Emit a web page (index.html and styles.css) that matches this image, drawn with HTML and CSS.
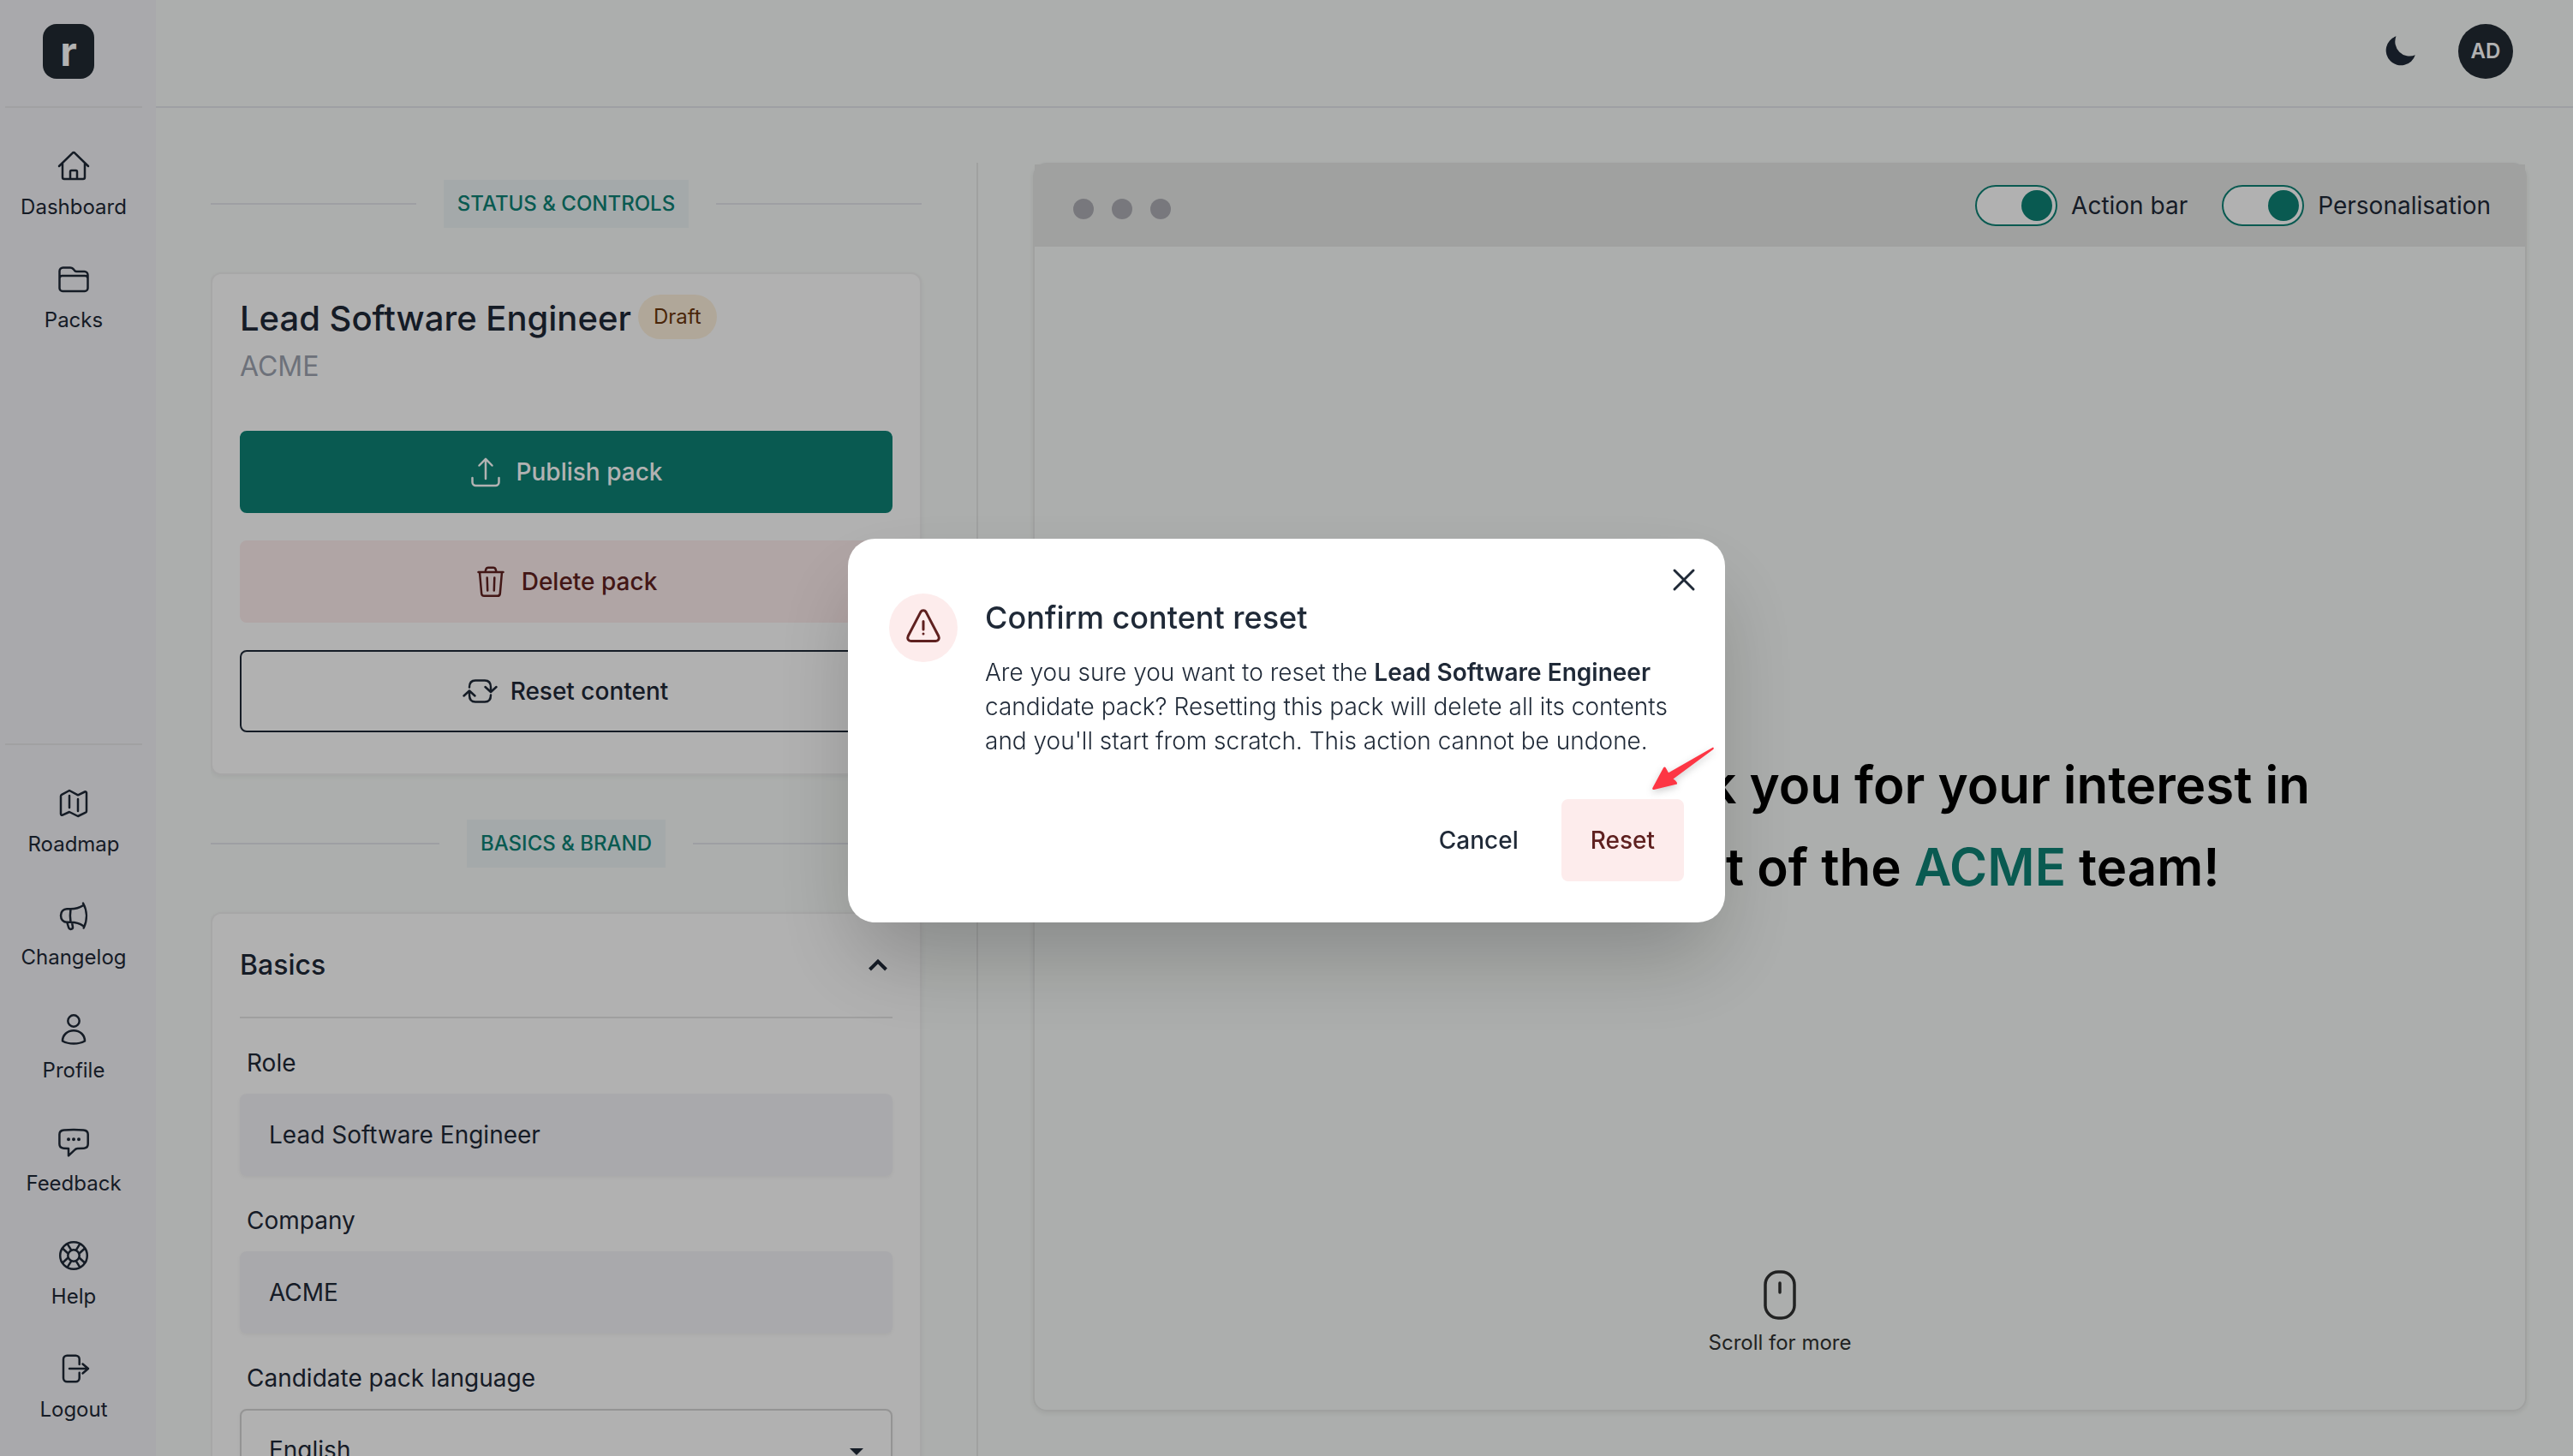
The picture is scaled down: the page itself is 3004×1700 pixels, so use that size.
FILE: index.html
```html
<!DOCTYPE html>
<html lang="en">
<head>
    <meta charset="UTF-8">
    <meta name="viewport" content="width=device-width, initial-scale=1.0">
    <title>Lead Software Engineer | Pack editor</title>
    <link rel="stylesheet" href="styles.css">
</head>
<body>
    <div class="app">
        <aside class="sidebar">
            <div class="sidebar-brand">
                <a class="logo" href="#">r</a>
            </div>

            <nav class="sidebar-nav">
                <a class="nav-item" href="#">
                    <svg class="nav-icon" viewBox="0 0 40 40"><path d="M3 20 18.500 4.800a2 2 0 0 1 3 0L37 20M7 17v16a2 2 0 0 0 2 2h22a2 2 0 0 0 2-2V17M16 35v-8.500a1.500 1.500 0 0 1 1.500-1.500h5a1.500 1.500 0 0 1 1.500 1.500V35"/></svg>
                    Dashboard
                </a>
                <a class="nav-item" href="#">
                    <svg class="nav-icon" viewBox="0 0 40 40"><path d="M3.500 30.500v-20a4 4 0 0 1 4-4H16c1.500 0 2.500.5 3.500 1.500l1.500 1.800c.8.9 1.500 1.200 2.500 1.200H32.500a4 4 0 0 1 4 4v15.500a3.500 3.500 0 0 1-3.500 3.500H7a3.500 3.500 0 0 1-3.500-3.500zM3.500 19a3 3 0 0 1 3-3h27a3 3 0 0 1 3 3"/></svg>
                    Packs
                </a>
            </nav>

            <nav class="sidebar-nav sidebar-nav-bottom">
                <a class="nav-item" href="#">
                    <svg class="nav-icon" viewBox="0 0 40 40"><path d="M5 11.500a2 2 0 0 1 1-1.700L15 5l10 5.300 8-3.800a1.400 1.400 0 0 1 2 1.300V29a2 2 0 0 1-1 1.700L25 35l-10-5-8 3.700a1.400 1.400 0 0 1-2-1.300zM15 11v14M25 15v14"/></svg>
                    Roadmap
                </a>
                <a class="nav-item" href="#">
                    <svg class="nav-icon" viewBox="0 0 40 40"><path d="M16.500 11.300H12c-4 0-7 3.200-7 7.700s3 7.700 7 7.700h4.500M16.500 11.300c5 0 10.500-1.500 14.800-4.300M16.500 26.700c5 0 10.500 1.300 14.500 4.300M16.500 11.300c-.8 5-.8 10.400 0 15.400M31 4.500c5 9 5 20 .7 29M12.300 27l2 6.500c1.200 2.400 5 1.500 4.700-1L18 27"/></svg>
                    Changelog
                </a>
                <a class="nav-item" href="#">
                    <svg class="nav-icon" viewBox="0 0 40 40"><circle cx="20" cy="10" r="6.700"/><path d="M7 33.500c0-7 5.500-12.200 13-12.200s13 5.200 13 12.200c-4 2.200-8 3-13 3s-9-.8-13-3z"/></svg>
                    Profile
                </a>
                <a class="nav-item" href="#">
                    <svg class="nav-icon" viewBox="0 0 40 40"><path d="M8.500 5.600c8-.8 15-.8 23 0 3.200.3 5.200 2 5.200 5v11.200c0 3-1.700 4.700-4.700 4.900l-7.500.4c-1.600.1-2.500.6-3.600 1.700L14 35.300V27l-5.700-.3c-3-.2-4.900-1.900-4.900-4.900V10.600c0-3 2-4.700 5.100-5z"/><path class="nav-icon-dots" d="M14 16.300h.01M20 16.300h.01M26 16.300h.01"/></svg>
                    Feedback
                </a>
                <a class="nav-item" href="#">
                    <svg class="nav-icon" viewBox="0 0 40 40"><circle cx="20" cy="20" r="15.800"/><circle cx="20" cy="20" r="6.700"/><path d="m13.500 17.500-6.300-5.700M17.200 13.600l-4.500-7.200M26.500 17.500l6.300-5.700M22.800 13.600l4.500-7.200M13.500 22.500l-6.300 5.700M17.200 26.400l-4.500 7.200M26.500 22.500l6.300 5.700M22.800 26.400l4.500 7.200"/></svg>
                    Help
                </a>
                <a class="nav-item" href="#">
                    <svg class="nav-icon" viewBox="0 0 40 40"><path d="M26.700 15V9a4.300 4.300 0 0 0-4.300-4.300H12.300A4.300 4.300 0 0 0 8 9v22a4.300 4.300 0 0 0 4.300 4.300h10.100a4.300 4.300 0 0 0 4.300-4.300v-6.300M15 20h22M30.500 14.500 37 20l-6.500 5.500"/></svg>
                    Logout
                </a>
            </nav>
        </aside>

        <div class="page">
            <header class="topbar">
                <button class="theme-btn" type="button" aria-label="Toggle dark mode">
                    <svg viewBox="0 0 36 36"><path d="M13.500.3A17.500 17.500 0 1 0 35.800 22.300 17 17 0 0 1 13.500.3z"/></svg>
                </button>
                <button class="avatar" type="button">AD</button>
            </header>

            <main class="workspace">
                <section class="editor">
                    <div class="section-title"><span>STATUS &amp; CONTROLS</span></div>

                    <div class="card card-status">
                        <div class="pack-title">
                            <h1>Lead Software Engineer</h1>
                            <span class="chip">Draft</span>
                        </div>
                        <p class="pack-company">ACME</p>

                        <div class="pack-actions">
                            <button class="btn btn-primary" type="button">
                                <svg class="btn-icon" viewBox="0 0 36 36"><path d="M18 26V3M10.500 10.500 18 2.800l7.500 7.700M2.500 25v5a4 4 0 0 0 4 4h23a4 4 0 0 0 4-4v-5"/></svg>
                                Publish pack
                            </button>
                            <button class="btn btn-danger" type="button">
                                <svg class="btn-icon" viewBox="0 0 36 36"><path d="M3.500 7h29M11.500 7l.8-3.200c.4-1.400 1.200-2.100 2.700-2.100h6c1.500 0 2.300.7 2.700 2.100l.8 3.200M5 7l2.200 25c.2 1.900 1.200 2.800 3 2.800h15.600c1.800 0 2.800-.9 3-2.800L31 7M13.700 13.500l.5 15M22.300 13.500l-.5 15"/></svg>
                                Delete pack
                            </button>
                            <button class="btn btn-outline" type="button">
                                <svg class="btn-icon" viewBox="0 0 36 36"><path d="M6 13.500c0-5 2.500-8 7-8h11c4.500 0 7 3 7 8V19M24.500 13l6.500 6 6.500-6M31 22.500c0 5-2.500 8-7 8H13c-4.500 0-7-3-7-8V17.500M-.5 23.500 6 17.500l6.500 6"/></svg>
                                Reset content
                            </button>
                        </div>
                    </div>

                    <div class="section-title"><span>BASICS &amp; BRAND</span></div>

                    <div class="card card-form">
                        <button class="card-toggle" type="button" aria-expanded="true">
                            Basics
                            <svg viewBox="0 0 24 16"><path d="M2.500 13 12 3.500l9.500 9.500"/></svg>
                        </button>

                        <div class="field">
                            <label for="role">Role</label>
                            <input id="role" type="text" value="Lead Software Engineer">
                        </div>
                        <div class="field">
                            <label for="company">Company</label>
                            <input id="company" type="text" value="ACME">
                        </div>
                        <div class="field">
                            <label for="language">Candidate pack language</label>
                            <div class="select">
                                <select id="language">
                                    <option>English</option>
                                </select>
                            </div>
                        </div>
                    </div>
                </section>

                <section class="preview">
                    <div class="preview-bar">
                        <div class="dots"><i></i><i></i><i></i></div>
                        <label class="switch"><input type="checkbox" checked>Action bar</label>
                        <label class="switch"><input type="checkbox" checked>Personalisation</label>
                    </div>
                    <div class="preview-body">
                        <h2>Hi Candidate, thank you for your interest in<br>becoming a part of the <em>ACME</em> team!</h2>
                        <div class="scroll-hint">
                            <svg viewBox="0 0 40 60"><rect x="3" y="3" width="34" height="54" rx="15"/><path d="M20 16v11"/></svg>
                            Scroll for more
                        </div>
                    </div>
                </section>
            </main>
        </div>
    </div>

    <div class="backdrop">
        <div class="modal" role="dialog" aria-modal="true" aria-labelledby="modalTitle">
            <button class="modal-close" type="button" aria-label="Close">
                <svg viewBox="0 0 24 24"><path d="m1 1 22 22M23 1 1 23"/></svg>
            </button>
            <div class="modal-content">
                <div class="modal-badge">
                    <svg viewBox="0 2 40 40"><path d="M17 3.400 2.200 31.800C.8 34.700 2.500 37.500 5.600 37.500h28.800c3.100 0 4.800-2.800 3.400-5.700L23 3.400c-1.400-2.300-4.600-2.300-6 0zM20 14.500v9.500M20 29h.01"/></svg>
                </div>
                <div class="modal-text">
                    <h2 id="modalTitle">Confirm content reset</h2>
                    <p>Are you sure you want to reset the <strong>Lead Software Engineer</strong> candidate pack? Resetting this pack will delete all its contents and you'll start from scratch. This action cannot be undone.</p>
                </div>
            </div>
            <div class="modal-actions">
                <button class="btn" type="button">Cancel</button>
                <button class="btn btn-danger" type="button">Reset</button>
            </div>
            <svg class="pointer" viewBox="0 0 72 50"><path d="M71 0.500c1 .5 1 1.500.2 2.500L24.500 37.500c3 2 5 4 4.500 6L2 50c-1.500 0-2.300-1-1.500-2.200L13 24.500c1-1.500 2-1.500 2.800 0l3.200 5.700z"/></svg>
        </div>
    </div>
</body>
</html>
```
FILE: styles.css
```css
:root {
    --bg: #f7faf8;
    --panel: #f3f3f6;
    --text: #1f2937;
    --muted: #9ca3af;
    --green: #0e8275;
    --line: #e2e4ea;
    --frame: #e5e7e6;
    --red-bg: #fdecec;
    --red: #5f2120;
}

* {
    margin: 0;
    padding: 0;
    box-sizing: border-box;
}

body {
    font-family: Inter, sans-serif;
    font-size: 28px;
    line-height: 40px;
    color: var(--text);
    background: var(--bg);
}

button, input, select {
    font: inherit;
    color: inherit;
    border: none;
    background: none;
}

button {
    cursor: pointer;
}

a {
    color: inherit;
    text-decoration: none;
}

svg {
    display: block;
    fill: none;
    stroke: currentColor;
    stroke-linecap: round;
    stroke-linejoin: round;
    overflow: visible;
}

.app {
    display: flex;
    height: 100vh;
    overflow: hidden;
}

/* Sidebar */
.sidebar {
    display: flex;
    flex-direction: column;
    flex: none;
    width: 182px;
    padding: 0 16px 22px 6px;
    background: var(--panel);
}

.sidebar-brand {
    padding: 28px 44px 32px;
    border-bottom: 2px solid #e7e7e9;
}

.logo {
    display: flex;
    align-items: center;
    justify-content: center;
    width: 60px;
    height: 64px;
    border-radius: 16px;
    background: #212a33;
    color: #fff;
    font-size: 48px;
    font-weight: 700;
}

.sidebar-nav {
    display: flex;
    flex-direction: column;
    gap: 16px;
    padding-top: 32px;
}

.sidebar-nav-bottom {
    margin-top: auto;
    border-top: 2px solid #e7e7e9;
}

.nav-item {
    display: flex;
    flex-direction: column;
    align-items: center;
    gap: 12px;
    padding: 16px 0;
    font-size: 24px;
    line-height: 32px;
}

.nav-icon {
    width: 40px;
    height: 40px;
    stroke-width: 2.5;
}

.nav-icon-dots {
    stroke-width: 4;
}

/* Top bar */
.page {
    display: flex;
    flex-direction: column;
    flex: 1;
    min-width: 0;
}

.topbar {
    display: flex;
    flex: none;
    justify-content: flex-end;
    align-items: center;
    gap: 50px;
    padding: 28px 70px 32px;
    border-bottom: 2px solid var(--line);
}

.theme-btn svg {
    width: 36px;
    height: 36px;
    fill: currentColor;
    stroke: none;
}

.avatar {
    width: 64px;
    height: 64px;
    border-radius: 50%;
    background: #212a33;
    color: #fff;
    font-size: 24px;
    font-weight: 600;
}

.workspace {
    display: grid;
    grid-template-columns: clamp(640px, 30vw, 896px) minmax(0, 1fr);
    gap: 64px;
    flex: 1;
    min-height: 0;
    padding: 64px 54px 0 64px;
}

/* Editor column */
.editor {
    min-height: 0;
    padding: 20px 64px 0 0;
    border-right: 2px solid var(--frame);
    overflow: hidden;
}

.section-title {
    display: flex;
    align-items: center;
    gap: 32px;
    margin-bottom: 52px;
}

.section-title::before,
.section-title::after {
    content: "";
    flex: 1;
    height: 2px;
    background: var(--line);
}

.section-title span {
    padding: 0 16px;
    background: #ebf2f4;
    color: var(--green);
    font-size: 24px;
    font-weight: 500;
    line-height: 56px;
}

.card {
    margin-bottom: 52px;
    border: 2px solid #efefef;
    border-radius: 12px;
    background: #fefefe;
    box-shadow: 0 2px 6px rgba(0, 0, 0, 0.06);
}

.card-status {
    padding: 24px 32px 48px;
}

.pack-title {
    display: flex;
    align-items: flex-start;
    gap: 8px;
}

.pack-title h1 {
    font-size: 40px;
    font-weight: 500;
    line-height: 56px;
}

.chip {
    padding: 0 18px;
    border-radius: 26px;
    background: #fcf0dc;
    color: #6b360c;
    font-size: 24px;
    line-height: 52px;
}

.pack-company {
    margin-top: 8px;
    color: var(--muted);
    font-size: 32px;
}

.pack-actions {
    display: flex;
    flex-direction: column;
    gap: 32px;
    margin-top: 55px;
}

.btn {
    display: flex;
    align-items: center;
    justify-content: center;
    gap: 18px;
    height: 96px;
    padding: 0 32px;
    border: 2px solid transparent;
    border-radius: 8px;
    font-weight: 500;
}

.btn-icon {
    width: 36px;
    height: 36px;
    stroke-width: 2.5;
}

.btn-primary {
    background: var(--green);
    border-color: var(--green);
    color: #fff;
}

.btn-danger {
    background: var(--red-bg);
    border-color: var(--red-bg);
    color: var(--red);
}

.btn-outline {
    border-color: var(--text);
}

.card-form {
    padding: 0 32px 48px;
}

.card-toggle {
    display: flex;
    align-items: center;
    justify-content: space-between;
    width: 100%;
    padding: 40px 5px 40px 0;
    border-bottom: 2px solid #e4e4e4;
    font-size: 32px;
    font-weight: 500;
}

.card-toggle svg {
    width: 24px;
    height: 16px;
    stroke-width: 4;
    stroke-linecap: butt;
    stroke-linejoin: miter;
}

.field {
    margin-top: 32px;
}

.field label {
    display: block;
    margin-bottom: 16px;
    padding-left: 8px;
}

.field input,
.field select {
    display: block;
    width: 100%;
    height: 96px;
    padding: 0 32px;
    border: 2px solid var(--panel);
    border-radius: 8px;
    background: var(--panel);
    box-shadow: 0 2px 4px rgba(0, 0, 0, 0.05);
}

.field select {
    appearance: none;
    border-color: #d4d4d4;
    background: #fefefe;
}

.select {
    position: relative;
}

.select::after {
    content: "";
    position: absolute;
    top: 46px;
    right: 34px;
    border: 8px solid transparent;
    border-top-color: var(--text);
    border-bottom: none;
}

/* Preview column */
.preview {
    display: flex;
    flex-direction: column;
    min-height: 0;
    margin-bottom: 52px;
    border: 2px solid var(--frame);
    border-radius: 16px;
    box-shadow: 0 2px 6px rgba(0, 0, 0, 0.08);
}

.preview-bar {
    display: flex;
    align-items: center;
    gap: 40px;
    padding: 24px 40px;
    background: var(--frame);
}

.dots {
    display: flex;
    gap: 21px;
    margin-right: auto;
    padding: 8px 5px 0;
}

.dots i {
    width: 24px;
    height: 24px;
    border-radius: 50%;
    background: #adadb3;
}

.switch {
    display: flex;
    align-items: center;
    gap: 16px;
}

.switch input {
    appearance: none;
    display: flex;
    justify-content: flex-end;
    width: 96px;
    height: 48px;
    padding: 4px;
    border: 2px solid var(--green);
    border-radius: 24px;
    background: #fefefe;
}

.switch input::before {
    content: "";
    width: 36px;
    border-radius: 50%;
    background: var(--green);
}

.preview-body {
    display: flex;
    flex: 1;
    flex-direction: column;
    align-items: center;
    justify-content: center;
    position: relative;
    padding-bottom: 6px;
    color: #000;
}

.preview-body h2 {
    font-size: 60px;
    font-weight: 600;
    line-height: 96px;
    text-align: center;
    white-space: nowrap;
}

.preview-body em {
    color: var(--green);
    font-style: normal;
}

.scroll-hint {
    display: flex;
    flex-direction: column;
    align-items: center;
    gap: 8px;
    position: absolute;
    bottom: 60px;
    color: #303231;
    font-size: 24px;
    line-height: 36px;
}

.scroll-hint svg {
    width: 40px;
    height: 60px;
    stroke-width: 3.5;
}

/* Confirm dialog */
.backdrop {
    display: flex;
    align-items: center;
    justify-content: center;
    position: fixed;
    inset: 0;
    padding-top: 6px;
    background: rgba(0, 0, 0, 0.3);
}

.modal {
    position: relative;
    width: 1024px;
    padding: 64px 48px 48px;
    border-radius: 32px;
    background: #fff;
    box-shadow: 0 50px 100px -10px rgba(0, 0, 0, 0.22);
}

.modal-close {
    position: absolute;
    top: 28px;
    right: 28px;
    padding: 8px;
}

.modal-close svg {
    width: 24px;
    height: 24px;
    stroke-width: 3;
}

.modal-content {
    display: flex;
    gap: 32px;
}

.modal-badge {
    display: flex;
    flex: none;
    align-items: center;
    justify-content: center;
    width: 80px;
    height: 80px;
    border-radius: 50%;
    background: var(--red-bg);
    color: var(--red);
}

.modal-badge svg {
    width: 40px;
    height: 40px;
    stroke-width: 3;
}

.modal-text h2 {
    margin-bottom: 16px;
    font-size: 36px;
    font-weight: 500;
    line-height: 56px;
}

.modal-text p {
    font-weight: 300;
}

.modal-text strong {
    font-weight: 600;
}

.modal-actions {
    display: flex;
    justify-content: flex-end;
    gap: 16px;
    margin-top: 48px;
}

.pointer {
    position: absolute;
    right: 13px;
    top: 243px;
    width: 72px;
    height: 50px;
    fill: #fd3644;
    stroke: none;
    filter: drop-shadow(0 3px 4px rgba(0, 0, 0, 0.2));
}
```
